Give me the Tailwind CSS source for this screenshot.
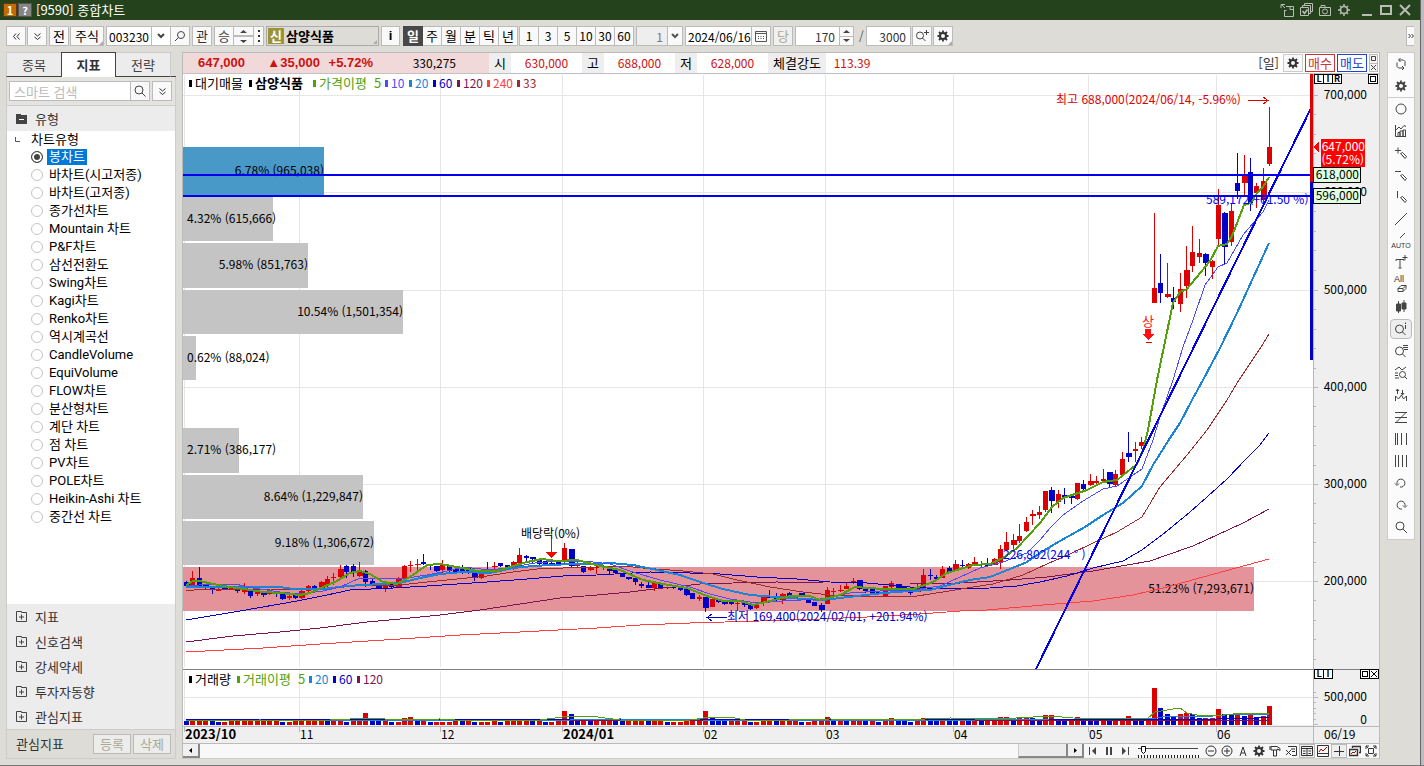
<!DOCTYPE html>
<html lang="ko">
<head>
<meta charset="utf-8">
<title>[9590] 종합차트</title>
<script src="https://cdn.jsdelivr.net/npm/@tailwindcss/browser@4"></script>
</head>
<body class="bg-[#dddcd6] font-['Noto_Sans_CJK_KR',sans-serif] text-[13px] leading-4 text-black">
<div class="flex h-screen w-full overflow-hidden border-b border-[#777777]">
<div class="flex min-w-0 flex-1 flex-col">

<!-- Title bar -->
<header class="flex h-5 shrink-0 items-center bg-[#24421b] pl-[3px] pr-2 text-white">
  <span class="flex size-[14px] items-center justify-center border border-[#5a3a1a] bg-[#c46a00] text-[11px] font-bold">1</span>
  <button class="ml-px flex size-[14px] items-center justify-center border border-[#555555] bg-[#858585] text-[11px] font-bold">?</button>
  <h1 class="ml-1 text-[13px]">[9590] 종합차트</h1>
  <div class="ml-auto flex items-center gap-[5px] text-[#b9bdb4]">
    <button aria-label="분리"><svg class="size-[14px]" viewBox="0 0 14 14" fill="none" stroke="currentColor"><path d="M1 5V1.500H5M1 1l4 4M6 3.500h7.500M4.500 7v6.500h9V3.500M4.500 7.500h2M10 4v2.500h3.500"/></svg></button>
    <button aria-label="저장"><svg class="size-[14px]" viewBox="0 0 14 14" fill="none" stroke="currentColor"><path d="M1.500 4.500h8v8h-8zM3.500 4V2.500h8v8H10M5.500 2V.500h8v8H12"/><path d="M3.500 8l2 2.500 3-4" stroke-width="1.600"/></svg></button>
    <button aria-label="캡처"><svg class="size-[14px]" viewBox="0 0 14 14" fill="none" stroke="currentColor"><path d="M1.500 4.500h11v8h-11zM3 4.500v-2h4v2"/><circle cx="7" cy="8.500" r="2.500"/></svg></button>
    <button aria-label="설정"><svg class="size-[14px]" viewBox="0 0 14 14" fill="none" stroke="currentColor"><circle cx="7" cy="7" r="3.500" stroke-width="1.600"/><path d="M7 1v2M7 11v2M1 7h2M11 7h2M3 3l1.200 1.200M9.800 9.800L11 11M3 11l1.200-1.200M9.800 4.200L11 3" stroke-width="1.500"/></svg></button>
    <button class="ml-1" aria-label="최소화"><svg class="size-[14px]" viewBox="0 0 14 14" stroke="currentColor" stroke-width="2"><path d="M2 12h10"/></svg></button>
    <button aria-label="최대화"><svg class="size-[14px]" viewBox="0 0 14 14" fill="none" stroke="currentColor" stroke-width="2"><path d="M2 3h10v8H2z"/></svg></button>
    <button aria-label="닫기"><svg class="size-[14px]" viewBox="0 0 14 14" stroke="currentColor" stroke-width="2"><path d="M2 2l10 10M12 2L2 12"/></svg></button>
  </div>
</header>

<!-- Toolbar -->
<div class="flex h-8 shrink-0 items-center pl-[6px] text-[13px]">
  <button class="flex h-5 w-5 items-center justify-center border border-[#bbbbbb] bg-[#f9f9f9]" aria-label="접기"><svg class="size-[7px]" viewBox="0 0 7 7" fill="none" stroke="#333"><path d="M3 .500l-2.500 3 2.500 3M6.500 .500L4 3.500l2.500 3"/></svg></button>
  <button class="ml-px flex h-5 w-5 items-center justify-center border border-[#bbbbbb] bg-[#f9f9f9]" aria-label="펼치기"><svg class="size-[7px]" viewBox="0 0 7 7" fill="none" stroke="#333"><path d="M.500 .500l3 2.500 3-2.500M.500 4l3 2.500L6.500 4"/></svg></button>
  <button class="ml-[2px] h-5 w-5 border border-[#bbbbbb] bg-[#f9f9f9]">전</button>
  <button class="relative ml-px h-5 w-[34px] border border-[#bbbbbb] bg-[#f9f9f9]">주식<span class="absolute bottom-0 right-0 border-2 border-transparent border-b-[#aaaaaa] border-r-[#aaaaaa]"></span></button>
  <input class="ml-[2px] h-5 w-[45px] border border-r-0 border-[#bbbbbb] bg-white pl-[2px] text-[12px]" value="003230" aria-label="종목코드">
  <button class="flex h-5 w-5 items-center justify-center border border-[#bbbbbb] bg-white" aria-label="종목 목록"><svg class="size-2" viewBox="0 0 8 8" fill="none" stroke="#444" stroke-width="2"><path d="M1 2l3 3 3-3"/></svg></button>
  <button class="-ml-px flex h-5 w-5 items-center justify-center border border-[#bbbbbb] bg-[#f9f9f9]" aria-label="종목 찾기"><svg class="size-3" viewBox="0 0 12 12" fill="none" stroke="#444"><circle cx="7" cy="5" r="3.500"/><path d="M4.500 7.500L1 11"/></svg></button>
  <button class="ml-[2px] h-5 w-5 border border-[#bbbbbb] bg-[#f9f9f9] text-[#333333]">관</button>
  <button class="ml-[2px] h-5 w-5 border border-[#bbbbbb] bg-[#f9f9f9] text-[#444444]">승</button>
  <div class="flex h-5 w-5 flex-col border-y border-r border-[#bbbbbb] bg-[#f9f9f9]">
    <button class="flex flex-1 items-center justify-center border-b-2 border-[#bbbbbb]" aria-label="이전 종목"><svg class="h-[3px] w-[7px]" viewBox="0 0 7 3"><path d="M0 3L3.500 0 7 3z" fill="#444"/></svg></button>
    <button class="flex flex-1 items-center justify-center" aria-label="다음 종목"><svg class="h-[3px] w-[7px]" viewBox="0 0 7 3"><path d="M0 0L3.500 3 7 0z" fill="#444"/></svg></button>
  </div>
  <button class="flex h-5 w-[10px] items-center justify-center border-y border-r border-[#bbbbbb] bg-[#f9f9f9]" aria-label="더보기"><svg class="h-3 w-[2px]" viewBox="0 0 2 12" fill="#333"><path d="M0 0h2v2H0zM0 5h2v2H0zM0 10h2v2H0z"/></svg></button>
  <button class="relative ml-[2px] flex h-5 w-[113px] items-center border border-[#aaaaaa] bg-[#dddcd6] pl-px font-bold"><span class="flex size-4 items-center justify-center bg-[#9c9236] text-white">신</span><span class="ml-[2px]">삼양식품</span><span class="absolute bottom-px right-px border-2 border-transparent border-b-[#aaaaaa] border-r-[#aaaaaa]"></span></button>
  <button class="ml-[2px] h-5 w-[19px] border border-[#bbbbbb] bg-[#f9f9f9] font-['Liberation_Sans'] text-[13px] font-bold">i</button>
  <div class="ml-[3px] flex h-5 border border-[#bbbbbb] bg-[#f9f9f9]">
    <button class="-my-px -ml-px w-5 bg-[#484848] font-bold text-white">일</button>
    <button class="w-[19px] border-r border-[#bbbbbb]">주</button>
    <button class="w-[19px] border-r border-[#bbbbbb]">월</button>
    <button class="w-[19px] border-r border-[#bbbbbb]">분</button>
    <button class="w-[19px] border-r border-[#bbbbbb]">틱</button>
    <button class="w-[18px]">년</button>
  </div>
  <div class="ml-px flex h-5 border border-[#bbbbbb] bg-[#f9f9f9] text-[12px]">
    <button class="w-[19px] border-r border-[#bbbbbb]">1</button>
    <button class="w-[19px] border-r border-[#bbbbbb]">3</button>
    <button class="w-[19px] border-r border-[#bbbbbb]">5</button>
    <button class="w-[19px] border-r border-[#bbbbbb]">10</button>
    <button class="w-[19px] border-r border-[#bbbbbb]">30</button>
    <button class="w-[18px]">60</button>
  </div>
  <input class="ml-[2px] h-5 w-[31px] border border-r-0 border-[#bbbbbb] bg-[#eeeeee] pr-1 text-right text-[12px] text-[#777777]" value="1" aria-label="주기">
  <button class="flex h-5 w-[16px] items-center justify-center border border-[#bbbbbb] bg-[#f9f9f9]" aria-label="주기 목록"><svg class="size-2" viewBox="0 0 8 8" fill="none" stroke="#555" stroke-width="2"><path d="M1 2l3 3 3-3"/></svg></button>
  <input class="ml-[2px] h-5 w-[66px] border border-r-0 border-[#bbbbbb] bg-white pl-[2px] text-[12px]" value="2024/06/16" aria-label="기준일">
  <button class="flex h-5 w-5 items-center justify-center border border-[#bbbbbb] bg-[#f9f9f9]" aria-label="달력"><svg class="size-3" viewBox="0 0 12 12" fill="none" stroke="#555"><path d="M.500 1.500h11v10H.500zM.500 3.500h11"/><path d="M3 6.500h7M3 8.500h7" stroke-dasharray="1 1.500"/></svg></button>
  <button class="ml-[2px] h-5 w-5 border border-[#bbbbbb] bg-[#f0f0ee] text-[#aaa898]">당</button>
  <input class="ml-[2px] h-5 w-[44px] border border-r-0 border-[#bbbbbb] bg-white pr-[4px] text-right text-[12px] text-[#333333]" value="170" aria-label="표시 봉수">
  <div class="flex h-5 w-[15px] flex-col border border-[#bbbbbb] bg-[#f9f9f9]">
    <button class="flex flex-1 items-center justify-center border-b border-[#bbbbbb]" aria-label="증가"><svg class="h-[3px] w-[7px]" viewBox="0 0 7 3"><path d="M0 3L3.500 0 7 3z" fill="#444"/></svg></button>
    <button class="flex flex-1 items-center justify-center" aria-label="감소"><svg class="h-[3px] w-[7px]" viewBox="0 0 7 3"><path d="M0 0L3.500 3 7 0z" fill="#444"/></svg></button>
  </div>
  <span class="w-[12px] pl-[5px] text-[12px] text-[#555555]">/</span>
  <input class="h-5 w-[45px] border border-[#bbbbbb] bg-white pr-[4px] text-right text-[12px] text-[#333333]" value="3000" aria-label="전체 봉수">
  <button class="ml-px flex h-5 w-5 items-center justify-center border border-[#bbbbbb] bg-[#f9f9f9]" aria-label="추가 조회"><svg class="size-[14px]" viewBox="0 0 14 14" fill="none" stroke="#444"><circle cx="5" cy="6.500" r="3.500"/><path d="M7.500 9l3 3M9 3.500h5M11.500 1v5"/></svg></button>
  <button class="relative ml-px flex h-5 w-5 items-center justify-center border border-[#bbbbbb] bg-[#f9f9f9]" aria-label="차트 설정"><svg class="size-3" viewBox="0 0 12 12" fill="none" stroke="#333"><circle cx="6" cy="6" r="3" stroke-width="2"/><path d="M6 .500v2M6 9.500v2M.500 6h2M9.500 6h2M2 2l1.500 1.500M8.500 8.500L10 10M2 10l1.500-1.500M8.500 3.500L10 2" stroke-width="1.800"/></svg><span class="absolute bottom-0 right-0 border-2 border-transparent border-b-[#aaaaaa] border-r-[#aaaaaa]"></span></button>
  <button class="ml-auto mr-[6px] flex h-5 w-2 items-center justify-center border border-r-0 border-[#bbbbbb] bg-[#f9f9f9]" aria-label="더보기"><svg class="size-[6px]" viewBox="0 0 6 6" fill="none" stroke="#333"><path d="M.500 1l2 2-2 2M3.500 1l2 2-2 2"/></svg></button>
</div>

<main class="flex min-h-0 flex-1 pb-[6px] pl-[6px] pr-[5px]">

<!-- Side panel -->
<aside class="flex w-[170px] shrink-0 flex-col text-[13px]">
  <nav class="flex h-[25px] shrink-0">
    <button class="w-[55px] border-b border-l border-t border-b-[#444444] border-l-[#cccccc] border-t-[#cccccc] bg-[#ececec] text-[#444444]">종목</button>
    <button class="w-[55px] border-x border-t border-[#444444] bg-white font-bold text-[#333333]">지표</button>
    <button class="w-[55px] border-b border-r border-t border-b-[#444444] border-r-[#cccccc] border-t-[#cccccc] bg-[#ececec] text-[#444444]">전략</button>
    <span class="flex-1 border-b border-[#444444]"></span>
  </nav>
  <div class="flex min-h-0 flex-1 flex-col border-x border-b border-[#cccccc] bg-[#ececec]">
    <div class="flex h-7 shrink-0 items-center bg-[#e4e3df] pl-[2px]">
      <input class="h-5 w-[122px] border border-[#bbbbbb] bg-white pl-1 placeholder:text-[#bbbbbb]" placeholder="스마트 검색" aria-label="스마트 검색">
      <button class="-ml-px flex h-5 w-5 items-center justify-center border border-[#bbbbbb] bg-[#f9f9f9]" aria-label="검색"><svg class="size-3" viewBox="0 0 12 12" fill="none" stroke="#444"><circle cx="5" cy="5" r="4"/><path d="M8 8l3.500 3.500"/></svg></button>
      <button class="ml-[2px] flex h-5 w-5 items-center justify-center border border-[#bbbbbb] bg-[#f9f9f9]" aria-label="모두 펼치기"><svg class="size-[7px]" viewBox="0 0 7 7" fill="none" stroke="#333"><path d="M.500 .500l3 2.500 3-2.500M.500 4l3 2.500L6.500 4"/></svg></button>
    </div>
    <button class="flex h-[26px] shrink-0 items-center border-t border-[#cccccc] pl-[9px] text-left text-[#333333]"><svg class="mr-2 h-[10px] w-[11px]" viewBox="0 0 11 10"><path d="M0 0h5v1h6v9H0z" fill="#444"/><path d="M3 5.500h5" stroke="#fff"/></svg>유형</button>
    <div class="min-h-0 flex-1 bg-white">
      <div class="flex h-[17px] items-start pl-2 leading-4"><svg class="mr-[11px] mt-[6px] size-[5px]" viewBox="0 0 5 5" fill="none" stroke="#555"><path d="M.500 0v4.500H5"/></svg>차트유형</div>
      <div id="types" class="font-['Roboto','Noto_Sans_CJK_KR',sans-serif] text-[13px]"></div>
    </div>
    <div class="flex shrink-0 flex-col text-[#333333]" id="groups"></div>
    <div class="flex h-[29px] shrink-0 items-center border-t border-[#cccccc] bg-[#dddcd6] pl-[9px] pr-1 text-[#333333]">관심지표
      <button class="ml-auto h-5 w-[38px] border border-[#bbbbbb] bg-[#ececea] text-[#aaa898]">등록</button>
      <button class="ml-[2px] h-5 w-[38px] border border-[#bbbbbb] bg-[#ececea] text-[#aaa898]">삭제</button>
    </div>
  </div>
</aside>

<!-- Chart area -->
<section class="ml-[6px] flex min-w-0 flex-1 flex-col border border-[#bbbbbb] border-b-[#cccccc] bg-white">
  <div class="flex h-[21px] shrink-0 items-center border-b border-[#c0c0c8] text-[12px]">
    <div class="flex h-full w-[306px] items-center bg-[#f1d9da] text-[#cc1111]">
      <span class="w-[62px] text-right font-['Liberation_Sans'] text-[13px] font-bold">647,000</span><span class="w-[75px] text-right font-['Liberation_Sans'] text-[13px] font-bold">▲35,000</span><span class="w-[53px] text-right font-['Liberation_Sans'] text-[13px] font-bold">+5.72%</span>
      <span class="ml-auto pr-[33px] text-black">330,275</span>
    </div>
    <span class="flex h-full w-[22px] items-center justify-center bg-[#eeeeee] text-[13px]">시</span><span class="w-[71px] text-center text-[#cc1111]">630,000</span>
    <span class="flex h-full w-[22px] items-center justify-center bg-[#eeeeee] text-[13px]">고</span><span class="w-[71px] text-center text-[#cc1111]">688,000</span>
    <span class="flex h-full w-[22px] items-center justify-center bg-[#eeeeee] text-[13px]">저</span><span class="w-[71px] text-center text-[#cc1111]">628,000</span>
    <span class="flex h-full w-[58px] items-center justify-center bg-[#eeeeee] text-[13px]">체결강도</span><span class="w-[52px] text-center text-[#cc1111]">113.39</span>
    <span class="ml-auto text-[13px] text-[#333333]">[일]</span>
    <button class="ml-1 flex h-[18px] w-5 items-center justify-center border border-[#cccccc] bg-[#f9f9f9]" aria-label="종목 설정"><svg class="size-3" viewBox="0 0 12 12" fill="none" stroke="#333"><circle cx="6" cy="6" r="3" stroke-width="2"/><path d="M6 .500v2M6 9.500v2M.500 6h2M9.500 6h2M2 2l1.500 1.500M8.500 8.500L10 10M2 10l1.500-1.500M8.500 3.500L10 2" stroke-width="1.800"/></svg></button>
    <button class="ml-[2px] h-[18px] w-[30px] border border-[#cc3333] bg-white text-[13px] text-[#cc3333]">매수</button>
    <button class="ml-[2px] h-[18px] w-[30px] border border-[#2244cc] bg-white text-[13px] text-[#2244cc]">매도</button>
    <div class="ml-[2px] mr-px flex h-[18px] w-[9px] flex-col border border-[#bbbbbb] bg-[#f4f4f4]">
      <button class="flex flex-1 items-center justify-center border-b border-[#bbbbbb]" aria-label="확대"><svg class="size-[5px]" viewBox="0 0 5 5" fill="none" stroke="#444"><path d="M.500 .500h4v4h-4z"/></svg></button>
      <button class="flex flex-1 items-center justify-center" aria-label="닫기"><svg class="size-[5px]" viewBox="0 0 5 5" stroke="#444"><path d="M0 0l5 5M5 0L0 5"/></svg></button>
    </div>
  </div>

  <div class="relative min-h-0 flex-1 bg-[#efefef]">
    <svg id="chart" class="block h-full w-full" viewBox="183 74 1196 669" preserveAspectRatio="xMinYMin meet" shape-rendering="crispEdges" role="img" aria-label="삼양식품 일봉 차트"></svg>
    <div class="absolute right-[37px] top-0 flex h-[10px] text-[9px] font-bold leading-[8px]">
      <button class="w-[10px] border border-black bg-white">L</button><button class="-ml-px w-[10px] border border-black bg-white">I</button><button class="-ml-px w-[10px] border border-black bg-white">R</button>
    </div>
    <button class="absolute right-px top-0 flex size-[10px] items-center justify-center border border-black bg-white" aria-label="최대화"><span class="size-[6px] border border-black"></span></button>
    <div class="absolute right-[46px] top-[89%] flex h-[10px] text-[9px] font-bold leading-[8px]">
      <button class="w-[10px] border border-black bg-white">L</button><button class="-ml-px w-[10px] border border-black bg-white">I</button>
    </div>
    <div class="absolute right-0 top-[89%] flex h-[10px]">
      <button class="flex size-[10px] items-center justify-center border border-black bg-white" aria-label="확대"><span class="size-[6px] border border-black"></span></button>
      <button class="-ml-px flex size-[10px] items-center justify-center border border-black bg-white" aria-label="닫기"><svg class="size-[6px]" viewBox="0 0 6 6" stroke="#000"><path d="M0 0l6 6M6 0L0 6"/></svg></button>
    </div>
  </div>

  <div class="flex h-[15px] shrink-0 items-center border-t border-[#bbbbbb] bg-[#f7f7f7] text-[#444444]">
    <button class="flex h-[14px] w-[17px] items-center justify-center border-b-2 border-r-2 border-[#888888] bg-[#f0f0f0]" aria-label="왼쪽으로"><svg class="h-[5px] w-[3px]" viewBox="0 0 3 5"><path d="M3 0v5L0 2.500z"/></svg></button>
    <div class="flex h-full flex-1 justify-end bg-[#f8f8f8]"><span class="h-[14px] w-[50px] border-b-2 border-l border-r-2 border-b-[#888888] border-l-[#cccccc] border-r-[#888888] bg-[#ececec]"></span></div>
    <button class="flex h-[14px] w-[16px] items-center justify-center border-b-2 border-r-2 border-[#888888] bg-[#f0f0f0]" aria-label="오른쪽으로"><svg class="h-[5px] w-[3px]" viewBox="0 0 3 5"><path d="M0 0v5l3-2.500z"/></svg></button>
    <button class="flex w-[18px] justify-center" aria-label="처음"><svg class="size-2" viewBox="0 0 8 8" fill="currentColor"><path d="M0 0h1v8H0zM7 0v8L3 4z"/></svg></button>
    <button class="flex w-[14px] justify-center" aria-label="일시정지"><svg class="size-2" viewBox="0 0 8 8" fill="currentColor"><path d="M1 0h2v8H1zM5 0h2v8H5z"/></svg></button>
    <button class="flex w-[18px] justify-center" aria-label="끝"><svg class="size-2" viewBox="0 0 8 8" fill="currentColor"><path d="M7 0h1v8H7zM1 0v8l4-4z"/></svg></button>
    <label class="relative flex h-full w-[69px] items-center justify-center" aria-label="재생 속도"><svg class="h-[13px] w-[61px]" viewBox="0 0 61 13" fill="none"><path d="M0 3.500h60" stroke="#444"/><path d="M3.500 1.500h4v5l-2 2-2-2z" fill="#fff" stroke="#000"/><path d="M0 11.500h61" stroke="#222" stroke-width="3" stroke-dasharray="1 2"/></svg><input type="range" class="absolute inset-0 w-full opacity-0" value="6"></label>
    <div class="flex h-full items-center text-[#333333]">
      <button class="flex w-4 justify-center" aria-label="축소"><svg class="size-3" viewBox="0 0 12 12" fill="none" stroke="currentColor"><circle cx="6" cy="6" r="5"/><path d="M3 6h6"/></svg></button>
      <button class="flex w-4 justify-center" aria-label="확대"><svg class="size-3" viewBox="0 0 12 12" fill="none" stroke="currentColor"><circle cx="6" cy="6" r="5"/><path d="M3 6h6M6 3v6"/></svg></button>
      <button class="flex w-4 justify-center" aria-label="글자"><svg class="size-3" viewBox="0 0 12 12" fill="none" stroke="currentColor"><path d="M3 11L6 2l3 9M4 8h4"/></svg></button>
      <button class="flex w-4 justify-center" aria-label="설정"><svg class="size-3" viewBox="0 0 12 12" fill="none" stroke="currentColor"><circle cx="6" cy="6" r="3" stroke-width="2"/><path d="M6 .500v2M6 9.500v2M.500 6h2M9.500 6h2M2 2l1.500 1.500M8.500 8.500L10 10M2 10l1.500-1.500M8.500 3.500L10 2" stroke-width="1.800"/></svg></button>
      <button class="flex w-4 justify-center" aria-label="도구"><svg class="size-3" viewBox="0 0 12 12" fill="none" stroke="currentColor"><path d="M2 1.500h6l3 2v2L8.500 4v1H2zM4.500 5v6h3V5M1 1v4"/></svg></button>
      <button class="flex w-4 justify-center" aria-label="지우기"><svg class="size-3" viewBox="0 0 12 12" fill="none" stroke="currentColor"><path d="M3 1.500h8.500v9H7M6 4h4M7 6.500h3M1 5l5 5M6 5l-5 5" /></svg></button>
      <button class="flex h-full w-4 items-center justify-center border border-[#bbbbbb] bg-[#eeeeee]" aria-label="표"><svg class="size-3 shrink-0" viewBox="0 0 12 12" fill="none" stroke="currentColor"><path d="M.500 1.500h11v9H.500zM.500 3.500h11M6 3v8M2 6h2.500M2 8.500h2.500M7.500 6H10M7.500 8.500H10"/></svg></button>
      <button class="flex w-4 justify-center" aria-label="차트"><svg class="size-3" viewBox="0 0 12 12" fill="none" stroke="currentColor"><path d="M.500 .500h11v11H.500zM.500 8.500h11"/><path d="M2 7l2-3 2 2 4-4" stroke="#b00"/></svg></button>
      <button class="flex h-full w-4 items-center justify-center border border-[#bbbbbb] bg-[#eeeeee]" aria-label="십자선"><svg class="size-3 shrink-0" viewBox="0 0 12 12" stroke="currentColor"><path d="M1 6.500h10M6.500 1v10"/></svg></button>
      <button class="flex w-4 justify-center" aria-label="새 창"><svg class="size-3" viewBox="0 0 12 12" fill="none" stroke="currentColor"><path d="M3.500 3V1.500h8v6H10M.500 4.500h8v6h-8z" stroke-width="1.400"/><path d="M2 9l2-2 1 1 2-2" stroke="#b00"/></svg></button>
      <button class="flex w-4 justify-center" aria-label="전체 화면"><svg class="size-3" viewBox="0 0 12 12" fill="none" stroke="currentColor"><path d="M1 4V1h3M8 1h3v3M11 8v3H8M4 11H1V8M3.500 3.500h5v5h-5zM1 1l2 2M11 1L9 3M1 11l2-2M11 11L9 9"/></svg></button>
    </div>
  </div>
</section>

<!-- Drawing tools -->
<nav id="tools" class="ml-[7px] flex w-[28px] shrink-0 flex-col self-start border border-[#cccccc] bg-[#fbfbfb] pb-px"></nav>
</main>
</div>
<div class="w-1 shrink-0 border-l border-[#666666] bg-[#bcbcc0]"></div>
</div>

<script>
const types = ['봉차트','바차트(시고저종)','바차트(고저종)','종가선차트','Mountain 차트','P&amp;F차트','삼선전환도','Swing차트','Kagi차트','Renko차트','역시계곡선','CandleVolume','EquiVolume','FLOW차트','분산형차트','계단 차트','점 차트','PV차트','POLE차트','Heikin-Ashi 차트','중간선 차트'];
document.getElementById('types').innerHTML = types.map((t, i) =>
  `<label class="flex h-[18px] items-center pl-6"><input type="radio" name="type" ${i ? '' : 'checked'} class="mr-1 size-3 appearance-none rounded-full border border-[#c4c4c4] bg-white checked:border-[#444444] checked:bg-[#444444] checked:shadow-[inset_0_0_0_2px_white]"><span class="${i ? 'px-[2px]' : 'bg-[#0078d7] px-[2px] text-white'}">${t}</span></label>`).join('');
document.getElementById('groups').innerHTML = ['지표','신호검색','강세약세','투자자동향','관심지표'].map(t =>
  `<button class="flex h-[25px] items-center pl-[9px]"><svg class="mr-2 size-[11px]" viewBox="0 0 11 11" fill="none" stroke="#444"><path d="M.500 .500h5v1h5v9H.500zM3 6h5M5.500 3.500v5"/></svg>${t}</button>`).join('');

const pencil = '<path d="M6.500 7.500l2-1 4 4-1.500 2z M8 9l2 2"/>';
const glass = '<circle cx="5.500" cy="7" r="4"/><path d="M8.500 10l3 3"/>';
const tools = [
  ['새로고침','<path d="M3 5.500V9.500l1.500 1.500H9M11 9V4.500L9.500 3H5M6.500 1L4.500 3l2 2M8 9l2 2-2 2"/>'],
  ['설정','<circle cx="7" cy="7" r="3" stroke-width="2"/><path d="M7 1.500v2M7 10.500v2M1.500 7h2M10.500 7h2M3 3l1.500 1.500M9.500 9.500L11 11M3 11l1.500-1.500M9.500 4.500L11 3" stroke-width="1.800"/>'],
  ['원','<circle cx="7" cy="7" r="5"/>'],
  ['지표','<path d="M1.500 1v11.500H12M4 12V8.500h2V12M6 12V7h3v5M9 12V6h2.500v6M2 6l3-3 2 2 3-3.500 2 1"/>'],
  ['추가','<path d="M1 4.500h6M4 1.500v6"/>'+pencil],
  ['수평선','<path d="M1 3.500h6"/>'+pencil],
  ['수직선','<path d="M3.500 1v7"/>'+pencil],
  ['추세선','<path d="M1 13L13 1"/>'],
  ['자동','<path d="M6 4l5-5"/>','AUTO'],
  ['문자','<path d="M2 5V3.500h8V5M6 3.500V12M4.500 12h3M11 -1v5M8.500 1.500h5"/>'],
  ['모두 지우기','<path d="M4 10.500l3-3h5l-3 3zM4 10.500v3h5v-3M9 13.500l3-3v-3"/>','All'],
  ['봉','<path d="M4.500 1v12M10 0v12"/><path d="M2.500 4h4v7h-4zM8 3h4v6H8z" fill="#444"/>'],
  ['정보',glass+'<path d="M11.500 3v4M11.500 .500v1.500"/>'],
  ['목록',glass+'<path d="M9 1.500h5M9 3.500h5M10 5.500h4"/>'],
  ['지표 검색','<path d="M1 4l4-3 3 3 4-3M1 7h3M1 9.500h3M1 12h4"/><circle cx="8.500" cy="8.500" r="3"/><path d="M10.500 10.500l2.500 2.500"/>'],
  ['변경','<path d="M1.500 13V8l3 3 3-4 2 4 3-3v5M3.500 6V1M2 3l1.500-2L5 3M8.500 2v5M7 5l1.500 2L10 5"/>'],
  ['피보나치','<path d="M1 2.500h12M1 7.500h12M1 12.500h12M12 2.500L2 12.500"/>'],
  ['등분선','<path d="M1.500 1v12M3.500 1v12M7.500 1v12M12.500 1v12"/>'],
  ['주기선','<path d="M1.500 1v12M4.500 1v12M8.500 1v12M12.500 1v12"/>'],
  ['되돌리기','<path d="M3 8a4 4 0 1 1 3 3M1 7.500l2 2 2-2"/>'],
  ['다시 실행','<path d="M11 8a4 4 0 1 0-3 3M9 7.500l2 2 2-2"/>'],
  ['돋보기','<circle cx="6" cy="6" r="4"/><path d="M9 9l4 4"/>']
];
document.getElementById('tools').innerHTML = tools.map(([n, p, t], i) =>
  `${i === 2 ? '<hr class="border-[#cccccc]">' : ''}<button aria-label="${n}" class="${i === 12 ? 'mx-[2px] flex h-[20px] my-px flex-col items-center justify-center rounded border border-[#bbbbbb] bg-[#eeeeee]' : 'relative flex h-[22px] flex-col items-center justify-center'}">${t ? `<span class="${t === 'AUTO' ? 'absolute bottom-[2px] font-[Liberation_Sans] text-[7px] leading-[8px] text-[#333333]' : 'absolute left-[6px] top-0 font-[Liberation_Sans] text-[9px] leading-[10px] text-[#333333]'}">${t}</span>` : ''}<svg class="size-[14px] overflow-visible" viewBox="0 0 14 14" fill="none" stroke="#444">${p}</svg></button>`).join('');

/* Candles: body top, body bottom, high, low (chart units), r = up, b = down */
const candles = `b582,586,581,587 r578,585,571,586 b578,587,567,587 b585,587,584,589 b587,589,586,594 r589,591,588,591 b587,589,587,589 r587,589,587,589 b587,591,587,593 r588,592,583,594 b590,596,589,598 r592,594,591,596 b591,595,591,597 r592,594,592,595 b592,594,592,597 b593,599,593,600 r596,598,595,600 b595,598,594,599 r591,598,590,599 r586,591,585,592
b586,588,585,589 r582,588,581,589 r579,585,576,587 r577,578,573,585 r569,577,565,578 b566,572,565,578 b566,572,564,577 r572,576,562,577 b571,582,570,587 b581,584,578,585 b584,588,583,589 r584,589,583,592 b584,587,584,588 r579,587,577,588 r566,578,565,579 r565,566,561,572 r564,565,559,571 b562,564,554,565 b565,566,564,570 b566,571,566,572
r565,570,560,573 b566,571,566,572 b569,573,569,573 b567,573,565,574 b568,572,568,574 b573,578,573,581 r572,578,571,579 b569,571,562,572 r566,567,562,570 b563,566,563,567 b565,567,565,570 r562,567,561,570 r555,563,548,563 b556,558,555,561 b557,559,557,563 b560,564,560,565 b561,564,561,564 b563,565,562,565 b562,565,562,565 r548,562,543,563
b549,566,549,568 r563,566,561,567 b566,572,566,573 r568,570,566,571 r567,568,565,574 r566,567,565,570 b567,571,567,574 b568,573,568,574 b573,577,573,577 b577,579,577,580 b578,582,578,585 b584,586,582,588 b585,588,582,588 r582,588,582,591 b584,588,584,588 b587,588,587,589 b587,588,586,589 b588,590,588,591 b589,595,589,596 b593,599,593,599
r597,599,595,601 b597,608,597,612 r599,607,599,607 b599,602,599,603 b602,604,602,605 b602,604,602,605 r603,604,601,611 b603,605,603,607 b604,609,604,610 r604,608,604,609 r597,602,597,606 b596,598,590,598 b597,600,593,602 r594,600,593,604 b593,597,592,597 r596,598,596,598 b593,596,593,596 b598,603,598,603 b602,606,602,606 b605,610,603,612
r590,604,587,604 r591,592,588,595 r590,591,585,592 r586,589,583,589 r581,583,578,584 b580,589,580,590 b588,591,588,593 b589,593,589,594 b592,593,591,594 r586,596,586,596 r583,587,581,588 b584,588,584,590 b587,591,587,591 b589,593,589,595 r587,592,584,592 r575,589,569,589 b575,576,569,580 b577,579,575,580 r569,578,566,578 b568,572,566,572
r564,570,560,570 b565,566,560,568 r564,568,563,569 r562,565,557,565 r564,565,561,567 b564,566,558,567 r559,565,558,565 r549,562,545,569 r542,550,532,550 r540,545,534,549 r536,541,524,543 r522,531,517,532 r514,516,510,525 r512,515,506,519 r491,510,491,512 b490,501,487,513 r494,502,490,508 b495,498,488,504 b496,498,496,504 r483,499,483,500
b484,489,480,490 r481,485,474,486 r481,483,476,485 r479,481,469,482 b472,484,472,488 r474,485,470,487 r459,475,452,475 b453,457,432,462 r449,451,442,462 r442,446,437,449 r342,343,342,343 r288,303,213,303 b283,293,254,303 r294,297,263,298 b298,302,287,309 r289,304,273,312 r270,286,246,298 r252,266,226,272 r253,257,239,263 b254,263,253,276
r261,267,260,279 r205,239,189,246 b213,247,212,264 r211,242,203,246 b183,191,153,199 r176,183,155,195 b172,203,158,211 r186,193,183,208 r181,200,168,204 r147,164,107,166`.split(/\s+/);
const volumes = [4,5,5,5,4,3,3,4,4,4,4,4,4,4,4,3,3,4,5,5,5,5,4,4,4,3,5,6,12,5,4,4,3,3,7,8,4,4,3,3,3,3,5,4,4,3,3,3,4,3,4,5,6,6,4,4,3,3,4,14,11,6,6,5,5,5,7,6,4,4,5,5,4,4,4,3,3,3,4,4,4,14,8,5,4,4,4,4,3,3,5,5,4,4,4,4,3,3,4,5,8,5,5,4,5,6,4,4,3,5,7,6,4,3,4,7,5,4,7,6,5,5,4,5,4,4,5,8,8,6,8,8,7,6,10,10,6,5,5,8,7,6,5,6,5,5,7,9,7,6,6,37,17,11,9,11,12,11,7,7,7,16,11,10,12,9,10,8,9,19];
const x = i => Math.round(186 + 6.41 * i);
const RED = '#dd0000', BLUE = '#0000c8';
const rect = (a, b, w, h, f, e = '') => `<rect x="${a}" y="${b}" width="${w}" height="${h}" fill="${f}" ${e}/>`;
const line = (p, c, w = 1) => `<polyline points="${p}" fill="none" stroke="${c}" stroke-width="${w}"/>`;
const text = (a, b, s, c = '#000', cls = 'text-[12px]', anchor = 'start') => `<text x="${a}" y="${b}" fill="${c}" class="${cls}" text-anchor="${anchor}">${s}</text>`;
let s = rect(183, 74, 1130, 652, '#fff');
const months = [[184,'2023/10',1],[299,'11'],[440,'12'],[562,'2024/01',1],[703,'02'],[825,'03'],[953,'04'],[1088,'05'],[1216,'06']];
months.forEach(([m]) => { s += rect(m, 75, 1, 592, '#e6e6e6') + rect(m, 671, 1, 54, '#e6e6e6'); });
[95,192,290,387,484,581].forEach(y => { s += rect(183, y, 1130, 1, '#e6e6e6'); });
s += rect(183, 697, 1130, 1, '#e6e6e6');
[[147,48,324,'#4898c8'],[197,44,273],[243,45,308],[290,44,403],[336,44,196],[428,45,239],[475,44,363],[521,44,374],[567,44,1254,'#e4939b']].forEach(([y,h,r,c]) => { s += rect(183, y, r - 183, h, c || '#c4c4c4'); });
s += text(324,175,'6.78% (965,038)','#000','text-[12px]','end') + text(187,223,'4.32% (615,666)') + text(308,269,'5.98% (851,763)','#000','text-[12px]','end') + text(403,316,'10.54% (1,501,354)','#000','text-[12px]','end') + text(187,362,'0.62% (88,024)') + text(187,454,'2.71% (386,177)') + text(363,501,'8.64% (1,229,847)','#000','text-[12px]','end') + text(374,547,'9.18% (1,306,672)','#000','text-[12px]','end') + text(1254,593,'51.23% (7,293,671)','#000','text-[12px]','end');
candles.forEach((c, i) => {
  const f = c[0] === 'r' ? RED : BLUE, [t, b, h, l] = c.slice(1).split(',').map(Number);
  s += rect(x(i), h, 1, Math.max(1, l - h), f) + rect(x(i) - 2, t, i % 3 ? 5 : 6, Math.max(1, b - t), f);
});
s += line('186,652 263,648 320,644 400,639 460,635 520,632 597,628 640,625 690,623 760,621 820,619 867,617 920,614 960,611 987,610 1043,605 1093,601 1133,595 1167,587 1203,577 1247,565 1269,559','#ff4040');
s += line('186,642 233,636 280,632 320,628 367,622 400,619 440,615 480,610 520,604 560,598 597,595 630,592 663,588 700,584 733,583 777,582 823,583 910,583 960,583 1010,580 1047,577 1093,571 1127,565 1150,561 1167,555 1193,546 1217,535 1243,523 1269,509','#7b1550');
s += line('186,620 240,611 297,601 327,595 350,590 393,588 427,586 457,584 487,582 527,579 563,576 597,575 650,572 690,573 720,574 757,577 797,579 830,582 867,583 910,587 943,589 990,588 1017,586 1040,582 1067,576 1093,568 1123,561 1142,550 1167,531 1190,512 1207,497 1227,479 1247,458 1260,445 1269,433',BLUE);
s += line('186,591 203,589 270,589 307,590 327,589 353,586 400,585 427,582 457,579 487,576 513,572 537,569 563,568 597,567 623,566 643,568 683,571 713,574 737,580 770,587 803,592 830,595 857,596 917,596 943,592 973,587 993,584 1023,575 1047,564 1070,554 1093,543 1117,532 1142,517 1160,487 1187,455 1207,430 1227,400 1239,380 1263,344 1269,334','#9c2b2b');
s += line('186,587 230,587 280,587 293,589 323,589 347,586 380,584 400,583 420,578 440,574 463,572 490,573 513,568 533,566 570,564 597,564 610,563 633,565 657,570 680,575 703,583 723,589 750,595 777,597 803,599 823,600 857,596 883,593 910,591 930,590 953,584 970,580 990,577 1010,569 1027,562 1043,551 1060,541 1085,527 1103,515 1123,503 1142,486 1153,465 1170,438 1180,423 1192,400 1203,380 1220,348 1237,313 1253,278 1269,243','#1a85d8',2);
s += line('186,586 213,584 235,584 253,588 280,592 300,594 323,591 340,587 360,578 393,578 407,578 427,575 447,571 463,567 490,570 513,567 535,563 560,561 593,562 610,564 633,572 660,580 690,587 710,594 730,599 757,603 783,601 820,599 850,593 880,591 913,590 940,586 960,577 980,568 1003,562 1027,553 1040,540 1050,528 1063,515 1083,501 1103,489 1117,486 1142,469 1153,440 1160,417 1173,380 1183,347 1193,320 1205,285 1218,267 1227,263 1243,235 1255,221 1263,212 1269,200','#4b4bff');
s += line('186,585 193,581 200,581 213,584 230,587 250,590 263,592 280,593 300,595 310,593 323,587 337,581 350,573 360,571 370,574 383,582 397,584 410,577 427,565 440,564 457,567 477,571 497,571 510,567 527,562 542,559 557,561 577,560 600,566 620,570 643,580 663,584 687,588 707,596 723,601 740,601 753,605 770,601 790,596 810,596 820,600 840,595 855,587 883,589 913,589 933,582 947,573 960,569 973,565 990,564 1003,558 1017,548 1040,523 1052,507 1063,498 1087,490 1103,482 1117,480 1137,464 1143,450 1148,430 1157,380 1173,303 1180,292 1187,289 1210,261 1218,246 1227,244 1232,236 1244,205 1251,203 1257,193 1263,187 1269,177','#55a00a',2);
s += line('1036,669 1313,104','#0000f0',2) + rect(183,174,1130,2,'#0000f0') + rect(183,195,1130,2,'#0000f0');
s += rect(1310,74,3,108,RED) + rect(1310,182,3,178,BLUE);
/* Annotations */
s += text(1056,104,'최고 688,000(2024/06/14, -5.96%)',RED) + line('1248,100.500 1268,100.500',RED) + line('1263,97 1268,100.500 1263,104',RED);
s += text(727,621,'최저 169,400(2024/02/01, +201.94%)',BLUE) + line('707,617.500 727,617.500',BLUE) + line('712,614 707,617.500 712,621',BLUE);
s += text(1206,204,'589,172(+61.50 %)','#0000f0') + text(1003,559,'226,802(244 ° )','#0000f0');
s += text(521,538,'배당락(0%)') + rect(551,539,1,14,'#ff0000') + '<path d="M546 552h11l-5.500 6z" fill="#ff0000"/>';
s += text(1142,326,'상','#ff1111','text-[13px]') + '<path d="M1145 329h6v5h3l-6 6-6-6h3z" fill="#ff1111"/>';
/* Volume */
s += rect(183,669,1196,1,'#808080');
volumes.forEach((v, i) => { s += rect(x(i) - 2, 725 - v, 5, v, i && v >= volumes[i - 1] ? RED : BLUE); });
s += line('186,720.500 1269,720.500','#7b1550') + line('186,719.500 1150,719.500 1187,719.500 1247,718.500 1269,717.500',BLUE);
s += line('186,721 260,720 300,721 400,720 520,721 620,719 700,720 900,721 1050,719 1120,719 1157,718 1167,716 1213,716 1233,714 1269,714','#1a85d8');
s += line('186,720 240,721 330,720 370,718 400,720 440,719 470,721 540,720 562,717 590,716 620,720 690,720 710,717 730,717 750,721 830,719 900,720 950,718 1000,719 1033,717 1050,716 1073,718 1147,719 1155,712 1167,710 1180,708 1187,713 1197,715 1217,716 1233,714 1247,713 1269,714','#55a00a');
/* Axes */
s += rect(1313,74,1,669,'#b8b8b8') + rect(183,725,1130,18,'#efefef') + rect(183,726,1196,1,'#b8b8b8');
months.forEach(([m, t, b]) => { s += rect(m,727,1,5,'#b8b8b8') + text(m + 1, 739, t, '#000', b ? 'text-[13px] font-bold' : 'text-[12px]'); });
[['700,000',95],['600,000',192],['500,000',290],['400,000',387],['300,000',484],['200,000',581]].forEach(([t, y]) => {
  s += rect(1314,y,4,1,'#b8b8b8') + text(1367,y + 4,t,'#000','text-[12px]','end');
  for (let k = 1; k < 5; k++) if (y + k * 19 < 669) s += rect(1314, Math.round(y + k * 19.4), 2, 1, '#b8b8b8');
});
s += text(1367,701,'500,000','#000','text-[12px]','end') + text(1367,724,'0','#000','text-[12px]','end') + text(1324,739,'06/19');
[692,697,702,708,713,719,724].forEach(y => { s += rect(1314,y,y === 697 || y === 724 ? 4 : 2,1,'#b8b8b8'); });
s += rect(1321,139,44,28,'#ff0000') + '<path d="M1313 147l6-5v11z" fill="#ff0000"/>' + text(1365,151,'647,000','#fff','text-[12px]','end') + text(1364,164,'(5.72%)','#fff','text-[12px]','end');
[[167,'618,000'],[188,'596,000']].forEach(([y, t]) => { s += rect(1313.5,y + .5,47,15,'#e0ffe0','stroke="#000"') + text(1359,y + 12,t,'#000','text-[12px]','end'); });
/* Legends */
const legend = (y, items) => items.forEach(([a, t, c, b]) => { s += rect(a, y - 8, 3, 7, c) + text(a + 6, y, t, c, b ? 'text-[13px] font-bold' : /^\d/.test(t) ? 'text-[12px]' : 'text-[13px]'); });
legend(88, [[189,'대기매물','#000'],[249,'삼양식품','#000',1],[313,'가격이평&#160; 5','#55a00a'],[385,'10','#4b4bff'],[409,'20','#1a85d8'],[433,'60',BLUE],[457,'120','#7b1550'],[487,'240','#ff4040'],[517,'33','#9c2b2b']]);
legend(684, [[189,'거래량','#000'],[237,'거래이평&#160; 5','#55a00a'],[309,'20','#1a85d8'],[333,'60',BLUE],[357,'120','#7b1550']]);
document.getElementById('chart').innerHTML = s;
</script>
</body>
</html>
